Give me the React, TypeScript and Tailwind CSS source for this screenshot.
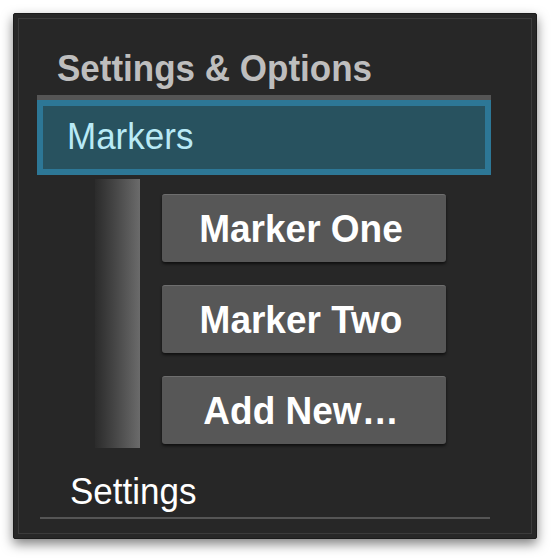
export default function App() {
  const buttons = ["Marker One", "Marker Two", "Add New…"];
  return (
    <div className="w-[551px] h-[558px] bg-white pt-[13px] pl-[13px] font-['Liberation_Sans',Arial,sans-serif]">
      <div className="w-[524px] h-[526px] bg-[#272727] border border-[#1b1b1b] rounded-[2px] p-[4px] shadow-[0_5px_12px_rgba(0,0,0,0.5)]">
        <div className="h-full border border-[#3b3b3b] flex flex-col">
          <h1 className="pt-[31px] pl-[38px] text-[35px] leading-none font-bold text-[#bebebe]">
            <span className="inline-block scale-y-[1.06]">Settings &amp; Options</span>
          </h1>

          <div className="ml-[18px] mt-[10px] w-[454px] border-t-[5px] border-[#555555]">
            <div className="h-[75px] border-[6px] border-[#2d7796] bg-[#28525f] pt-[12px] pl-[24px] text-[35px] leading-none text-[#b9eaf6]">
              <span className="inline-block scale-y-[1.06]">Markers</span>
            </div>
          </div>

          <div className="flex mt-[4px] ml-[76px]">
            <div className="w-[45px] h-[269px] bg-gradient-to-r from-[#2b2b2b] to-[#6b6b6b]" />
            <div className="ml-[22px] mt-[15px] flex flex-col gap-[23px]">
              {buttons.map((b) => (
                <div
                  key={b}
                  className="w-[284px] h-[68px] rounded-[3px] bg-[#575757] border-t border-[#6e6e6e] shadow-[0_2px_3px_rgba(0,0,0,0.6)] flex items-center justify-center pr-[6px] text-[37px] leading-none font-bold text-white"
                >
                  <span className="inline-block scale-y-[1.05]">{b}</span>
                </div>
              ))}
            </div>
          </div>

          <div className="pl-[51px] mt-[25px] text-[35px] leading-none text-white">
            <span className="inline-block scale-y-[1.06]">Settings</span>
          </div>
          <div className="ml-[21px] mt-[9px] w-[450px] h-[2px] bg-[#555555]" />
        </div>
      </div>
    </div>
  );
}
